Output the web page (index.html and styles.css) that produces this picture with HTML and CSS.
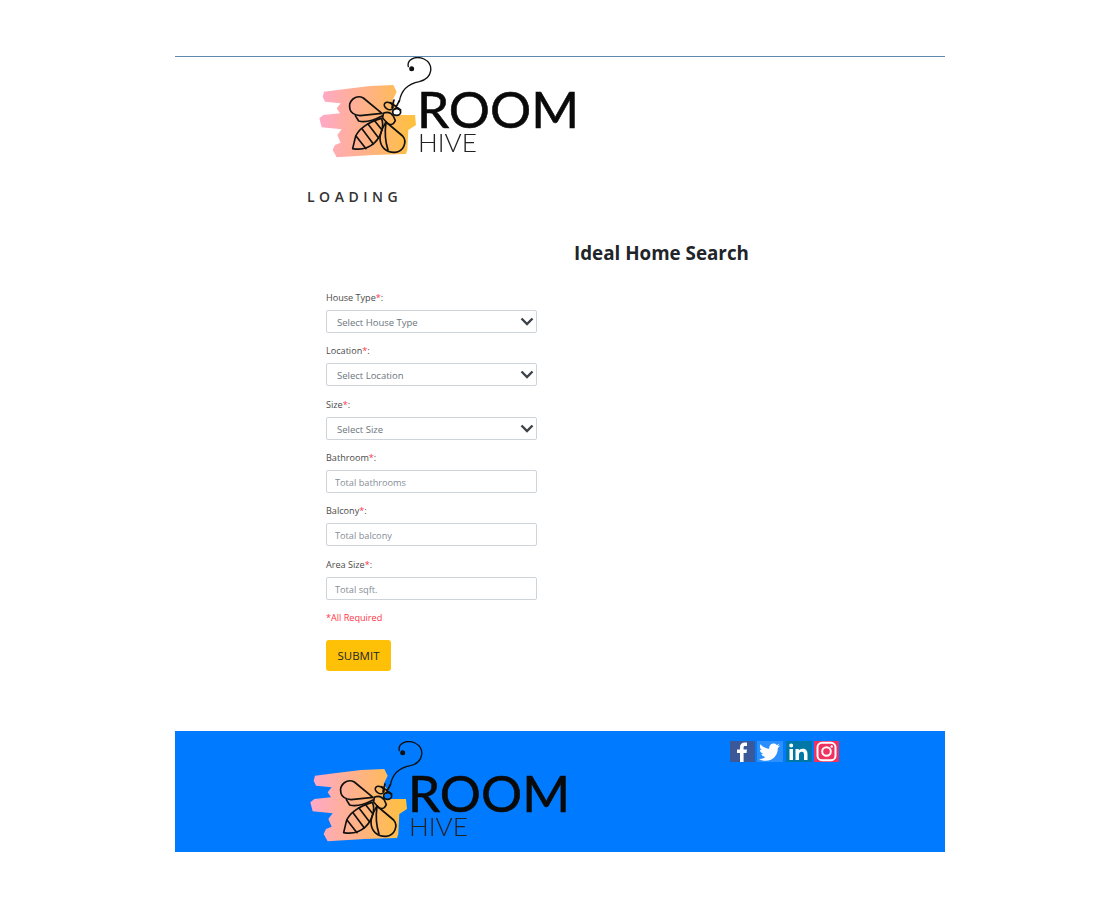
FILE: index.html
```html
<!DOCTYPE html>
<html lang="en">
<head>
<meta charset="utf-8">
<title>Room Hive</title>
<link rel="stylesheet" href="styles.css">
</head>
<body>
<svg class="defs" width="0" height="0" aria-hidden="true">
  <defs>
    <linearGradient id="brush" x1="0" x2="1" y1="0" y2="0">
      <stop offset="0" stop-color="#ffa8c8"/>
      <stop offset="0.55" stop-color="#ffb37e"/>
      <stop offset="1" stop-color="#ffc13a"/>
    </linearGradient>
    <symbol id="logo" viewBox="0 0 262 104">
      <g transform="translate(-18 -7) scale(.3333)" fill="none" stroke="#111" stroke-width="5" stroke-linejoin="round" stroke-linecap="round">
        <path fill="url(#brush)" stroke="none" d="M72 125L130 118L210 108L280 105L290 125L278 150L292 172L270 195L345 195L348 225L325 240L322 300L318 312L220 315L110 322L98 300L105 285L122 278L112 255L125 238L65 232L58 205L70 195L120 190L110 175L122 160L75 155L68 140Z"/>
        <path stroke-width="4" d="M298 155C303 122 320 102 358 95C400 85 402 42 372 27C345 15 320 30 325 50"/>
        <circle cx="335" cy="56" r="5" fill="#111"/>
        <path d="M150 178C143 150 170 133 190 144L246 190L180 197C165 195 153 190 150 178Z"/>
        <path d="M166 197L176 213C195 218 225 209 246 198"/>
        <ellipse cx="266" cy="168" rx="14" ry="10" transform="rotate(30 266 168)"/>
        <ellipse cx="290" cy="186" rx="12" ry="10"/>
        <path d="M250 190C258 186 270 184 280 198L286 212C280 226 270 226 262 220L248 204Z"/>
        <path d="M158 296L166 262C172 240 205 215 244 205C254 225 244 258 224 278C205 296 180 300 158 296Z"/>
        <path d="M186 236L220 282M168 258L198 296M204 222L236 264M222 210L246 240"/>
        <path d="M258 216L308 258C322 275 312 305 285 307C258 308 240 290 240 265C240 245 250 230 258 216Z"/>
        <path d="M258 218C254 245 256 275 264 300"/>
        <path d="M272 158L302 180M282 150L276 172M298 152L286 176"/>
      </g>
      <text class="logo-room" x="99" y="71" textLength="162" lengthAdjust="spacingAndGlyphs">ROOM</text>
      <text class="logo-hive" x="100" y="95" textLength="59" lengthAdjust="spacingAndGlyphs">HIVE</text>
    </symbol>
  </defs>
</svg>

<div class="page">
  <header class="masthead">
    <svg class="logo" width="262" height="104"><use href="#logo"/></svg>
    <p class="loading">LOADING</p>
  </header>

  <main class="search">
    <h1 class="title">Ideal Home Search</h1>
    <form class="form">
      <div class="field">
        <label class="label" for="house">House Type<span class="req">*</span>:</label>
        <div class="select-wrap">
          <select class="control select" id="house"><option>Select House Type</option></select>
          <svg class="chevron" viewBox="0 0 14 9" width="14" height="9"><path d="M1.5 1.5L7 7L12.500 1.500" fill="none" stroke="#3d4349" stroke-width="2.400"/></svg>
        </div>
      </div>
      <div class="field">
        <label class="label" for="location">Location<span class="req">*</span>:</label>
        <div class="select-wrap">
          <select class="control select" id="location"><option>Select Location</option></select>
          <svg class="chevron" viewBox="0 0 14 9" width="14" height="9"><path d="M1.5 1.5L7 7L12.500 1.500" fill="none" stroke="#3d4349" stroke-width="2.400"/></svg>
        </div>
      </div>
      <div class="field">
        <label class="label" for="size">Size<span class="req">*</span>:</label>
        <div class="select-wrap">
          <select class="control select" id="size"><option>Select Size</option></select>
          <svg class="chevron" viewBox="0 0 14 9" width="14" height="9"><path d="M1.5 1.5L7 7L12.500 1.500" fill="none" stroke="#3d4349" stroke-width="2.400"/></svg>
        </div>
      </div>
      <div class="field">
        <label class="label" for="bath">Bathroom<span class="req">*</span>:</label>
        <input class="control" id="bath" placeholder="Total bathrooms">
      </div>
      <div class="field">
        <label class="label" for="balcony">Balcony<span class="req">*</span>:</label>
        <input class="control" id="balcony" placeholder="Total balcony">
      </div>
      <div class="field">
        <label class="label" for="area">Area Size<span class="req">*</span>:</label>
        <input class="control" id="area" placeholder="Total sqft.">
      </div>
      <p class="required">*All Required</p>
      <button class="submit" type="button">SUBMIT</button>
    </form>
  </main>

  <footer class="footer">
    <svg class="logo" width="262" height="104"><use href="#logo"/></svg>
    <div class="social">
      <svg class="social-icon" viewBox="0 0 25 21"><rect width="25" height="21" fill="#3b5998"/><path fill="#fff" d="M10 21V12H7V8.500H10V6C10 3 12 1.500 14.500 1.500H17V5H15C14 5 13.600 5.500 13.600 6.500V8.500H17L16.500 12H13.600V21Z"/></svg>
      <svg class="social-icon wide" viewBox="0 0 26 21"><rect width="26" height="21" fill="#2b8fff"/><path fill="#fff" d="M23 4.500C22.200 4.900 21.400 5.100 20.500 5.200C21.400 4.600 22.100 3.800 22.400 2.800C21.600 3.300 20.600 3.700 19.600 3.900C18.800 3 17.700 2.500 16.500 2.500C14.100 2.500 12.200 4.500 12.200 6.800C12.200 7.200 12.200 7.500 12.300 7.800C8.800 7.600 5.600 5.900 3.500 3.300C3.100 4 2.900 4.700 2.900 5.500C2.900 7 3.700 8.300 4.800 9.100C4.100 9.100 3.400 8.900 2.800 8.500C2.800 10.700 4.300 12.400 6.300 12.800C5.700 13 5 13 4.400 12.900C5 14.700 6.600 15.900 8.500 16C6.600 17.400 4.400 18.100 2 17.900C3.900 19.100 6.200 19.800 8.700 19.800C16.500 19.800 20.800 13.300 20.800 7.700V7.100C21.700 6.500 22.400 5.600 23 4.500Z"/></svg>
      <svg class="social-icon wide" viewBox="0 0 26 21"><rect width="26" height="21" fill="#0077a5"/><path fill="#fff" d="M3.500 8H7V19H3.500ZM5.200 2.500A2 2 0 1 1 5.200 6.500A2 2 0 0 1 5.200 2.500ZM9.500 8H12.800V9.500C13.500 8.400 14.800 7.700 16.400 7.700C20 7.700 21.500 9.700 21.500 13V19H18V13.800C18 12 17.400 10.800 15.800 10.800C14 10.800 13 12 13 13.800V19H9.500Z"/></svg>
      <svg class="social-icon" viewBox="0 0 25 21"><rect width="25" height="21" fill="#f0325f"/><rect x="3.500" y="1.800" width="18" height="17.400" rx="4.500" fill="none" stroke="#fff" stroke-width="2"/><circle cx="12.500" cy="10.500" r="4.300" fill="none" stroke="#fff" stroke-width="2"/><circle cx="17.700" cy="5.500" r="1.200" fill="#fff"/></svg>
    </div>
  </footer>
</div>
</body>
</html>
```

FILE: styles.css
```css
* {
  box-sizing: border-box;
}

html,
body {
  margin: 0;
  padding: 0;
  background: #fff;
}

body {
  font-family: "Open Sans", "Liberation Sans", sans-serif;
  color: #212529;
}

.defs {
  display: block;
  height: 0;
}

.page {
  width: 770px;
  margin: 0 auto;
  padding-top: 56px;
}

.masthead {
  border-top: 1px solid #5f88ad;
  padding-left: 143px;
}

.logo {
  display: block;
  filter: blur(0.35px);
}

.logo-room {
  font-family: Lato, "Liberation Sans", sans-serif;
  font-size: 50px;
  font-weight: 400;
  fill: #0a0a0a;
  stroke: #0a0a0a;
  stroke-width: 0.6px;
}

.logo-hive {
  font-family: Lato, "Liberation Sans", sans-serif;
  font-size: 25px;
  font-weight: 300;
  fill: #222;
}

.loading {
  margin: 26px 0 0 -11px;
  height: 20px;
  font-size: 14px;
  line-height: 20px;
  font-weight: 600;
  letter-spacing: 4.500px;
  color: #333;
}

.search {
  padding-left: 151px;
}

.title {
  margin: 33px 0 0 248px;
  height: 26px;
  font-size: 18.800px;
  line-height: 26px;
  font-weight: 700;
  color: #212529;
}

.form {
  display: flex;
  flex-direction: column;
  gap: 11.33px;
  width: 212px;
  margin-top: 25px;
}

.field {
  display: flex;
  flex-direction: column;
  gap: 5px;
}

.label {
  height: 14px;
  font-size: 9.100px;
  line-height: 14px;
  color: #4a4a4a;
}

.req {
  color: #ff3347;
}

.control {
  display: block;
  width: 211px;
  height: 23px;
  padding: 2px 8px 0;
  border: 1px solid #ced4da;
  border-radius: 2px;
  background: #fff;
  font-family: inherit;
  font-size: 9.200px;
  color: #6c757d;
}

.control::placeholder {
  color: #868e96;
  opacity: 1;
}

.select {
  appearance: none;
  padding: 2px 10px 0;
  font-size: 9.500px;
}

.select-wrap {
  position: relative;
}

.chevron {
  position: absolute;
  right: 4px;
  top: 7px;
}

.required {
  margin: 0;
  height: 14px;
  font-size: 9.100px;
  line-height: 14px;
  color: #ff3347;
}

.submit {
  width: 65px;
  height: 31px;
  margin-top: 4px;
  padding: 0;
  border: 0;
  border-radius: 3px;
  background: #ffc107;
  font-family: inherit;
  font-size: 11.500px;
  color: #212529;
}

.footer {
  display: flex;
  align-items: flex-start;
  height: 121px;
  margin-top: 60px;
  padding: 10px 0 0 134px;
  background: #007bff;
}

.social {
  display: flex;
  gap: 2px;
  margin-left: 159px;
}

.social-icon {
  display: block;
  width: 25px;
  height: 21px;
}

.social-icon.wide {
  width: 26px;
}

.social-icon.wide:nth-child(2) {
  margin-right: 1px;
}
```
